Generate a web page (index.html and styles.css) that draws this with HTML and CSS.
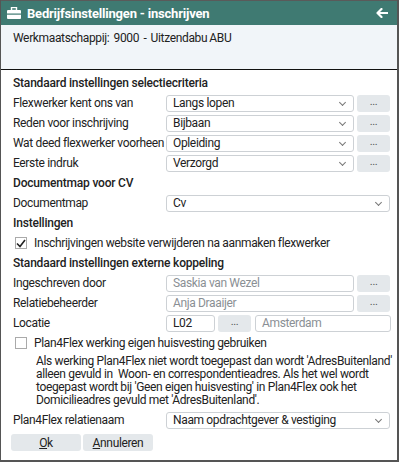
FILE: index.html
```html
<!DOCTYPE html>
<html lang="nl">
<head>
    <meta charset="UTF-8">
    <title>Bedrijfsinstellingen - inschrijven</title>
    <link rel="stylesheet" href="styles.css">
</head>
<body>
    <div class="dialog">
        <header class="titlebar">
            <svg class="title-icon" width="14" height="12" viewBox="0 0 14 12">
                <rect x="4.5" y="0.5" width="5" height="3" fill="none" stroke="#fff" stroke-width="1.4"/>
                <rect x="0" y="3" width="14" height="9" rx="1" fill="#fff"/>
                <rect x="0" y="6.5" width="14" height="1.2" fill="#3f7a72"/>
            </svg>
            <span class="title">Bedrijfsinstellingen - inschrijven</span>
            <svg class="back" width="12" height="10" viewBox="0 0 12 10">
                <path d="M5.5 1 L1.5 5 L5.5 9 M1.5 5 H11.5" fill="none" stroke="#fff" stroke-width="2.2" stroke-linecap="round" stroke-linejoin="round"/>
            </svg>
        </header>

        <div class="company">Werkmaatschappij:  9000  -  Uitzendabu ABU</div>

        <main class="body">
            <div class="heading">Standaard instellingen selectiecriteria</div>
            <div class="row">
                <label>Flexwerker kent ons van</label>
                <div class="select">Langs lopen</div>
                <div class="dots">...</div>
            </div>
            <div class="row">
                <label>Reden voor inschrijving</label>
                <div class="select">Bijbaan</div>
                <div class="dots">...</div>
            </div>
            <div class="row">
                <label>Wat deed flexwerker voorheen</label>
                <div class="select">Opleiding</div>
                <div class="dots">...</div>
            </div>
            <div class="row">
                <label>Eerste indruk</label>
                <div class="select">Verzorgd</div>
                <div class="dots">...</div>
            </div>

            <div class="heading">Documentmap voor CV</div>
            <div class="row">
                <label>Documentmap</label>
                <div class="select wide">Cv</div>
            </div>

            <div class="heading">Instellingen</div>
            <div class="check-row">
                <span class="box checked">
                    <svg width="10" height="9" viewBox="0 0 10 9"><path d="M1 4.5 L4 7.5 L9 1" fill="none" stroke="#222" stroke-width="1.6"/></svg>
                </span>
                <span>Inschrijvingen website verwijderen na aanmaken flexwerker</span>
            </div>

            <div class="heading">Standaard instellingen externe koppeling</div>
            <div class="row">
                <label>Ingeschreven door</label>
                <div class="input disabled">Saskia van Wezel</div>
                <div class="dots">...</div>
            </div>
            <div class="row">
                <label>Relatiebeheerder</label>
                <div class="input disabled">Anja Draaijer</div>
                <div class="dots">...</div>
            </div>
            <div class="row">
                <label>Locatie</label>
                <div class="loc">
                    <div class="input code">L02</div>
                    <div class="dots">...</div>
                    <div class="input disabled city">Amsterdam</div>
                </div>
            </div>

            <div class="check-row">
                <span class="box"></span>
                <span>Plan4Flex werking eigen huisvesting gebruiken</span>
            </div>
            <p class="note">Als werking Plan4Flex niet wordt toegepast dan wordt 'AdresBuitenland'<br>alleen gevuld in  Woon- en correspondentieadres. Als het wel wordt<br>toegepast wordt bij 'Geen eigen huisvesting' in Plan4Flex ook het<br>Domicilieadres gevuld met 'AdresBuitenland'.</p>

            <div class="row">
                <label>Plan4Flex relatienaam</label>
                <div class="select wide">Naam opdrachtgever &amp; vestiging</div>
            </div>

            <div class="actions">
                <button class="btn"><u>O</u>k</button>
                <button class="btn"><u>A</u>nnuleren</button>
            </div>
        </main>
    </div>
</body>
</html>
```

FILE: styles.css
```css
html, body {
    margin: 0;
    padding: 0;
    background: #d9dde1;
}
body {
    font-family: Roboto, "Noto Sans", sans-serif;
    font-size: 12px;
    letter-spacing: -0.35px;
    color: #222;
}
.dialog {
    width: 396px;
    height: 460px;
    border-left: 1px solid #555;
    border-right: 2px solid #555;
    border-bottom: 2px solid #555;
    background: #fff;
    display: flex;
    flex-direction: column;
}
.titlebar {
    height: 24px;
    background: #3f7a72;
    border-top: 1px solid #5a5a5a;
    display: flex;
    align-items: center;
    padding: 0 6px 0 6px;
    color: #fff;
}
.title-icon {
    margin-right: 6px;
}
.title {
    font-weight: bold;
    font-size: 13px;
    letter-spacing: -0.2px;
    flex: 1;
}
.back {
    margin-right: 3px;
}
.company {
    background: #f1f5f9;
    height: 45px;
    padding: 6px 0 0 12px;
    box-sizing: border-box;
    border-bottom: 1px solid #111;
    white-space: pre;
    word-spacing: -0.5px;
}
.body {
    padding: 3px 7px 0 12px;
    display: flex;
    flex-direction: column;
}
.heading {
    font-weight: 500;
    letter-spacing: -0.2px;
    height: 20px;
    line-height: 20px;
}
.row {
    display: flex;
    align-items: center;
    height: 20px;
}
.row label {
    width: 153px;
    flex: none;
    white-space: nowrap;
}
.select, .input {
    height: 17px;
    box-sizing: border-box;
    border: 1px solid #cdd1d5;
    border-radius: 3px;
    padding: 0 6px;
    line-height: 15px;
    width: 188px;
    background: #fff;
    white-space: nowrap;
}
.select {
    position: relative;
    width: 188px;
}
.select::after {
    content: "";
    position: absolute;
    right: 8px;
    top: 4px;
    width: 4px;
    height: 4px;
    border-right: 1px solid #777;
    border-bottom: 1px solid #777;
    transform: rotate(45deg);
}
.input {
    width: 190px;
}
.select.wide {
    width: 224px;
}
.disabled {
    color: #8a8f94;
}
.dots {
    width: 33px;
    height: 17px;
    margin-left: 3px;
    background: #e4e8eb;
    border-radius: 3px;
    text-align: center;
    line-height: 14px;
    color: #555;
    font-size: 11px;
}
.loc {
    display: flex;
}
.loc .code {
    width: 49px;
}
.loc .dots {
    margin-right: 4px;
}
.loc .city {
    width: 136px;
}
.check-row {
    display: flex;
    align-items: center;
    height: 20px;
    padding-left: 2px;
}
.box {
    width: 12px;
    height: 12px;
    box-sizing: border-box;
    border: 1px solid #aaa;
    margin-right: 7px;
    display: flex;
    align-items: center;
    justify-content: center;
    background: #fff;
}
.note {
    margin: 2px 0 3px 23px;
    line-height: 13px;
    white-space: pre;
}
.actions {
    display: flex;
    gap: 2px;
    margin: 4px 0 0 -2px;
}
.btn {
    width: 70px;
    height: 17px;
    border: none;
    border-radius: 3px;
    background: #e4e8eb;
    font-family: Roboto, "Noto Sans", sans-serif;
    font-size: 12px;
    letter-spacing: -0.35px;
    color: #222;
    padding: 0;
}
```
